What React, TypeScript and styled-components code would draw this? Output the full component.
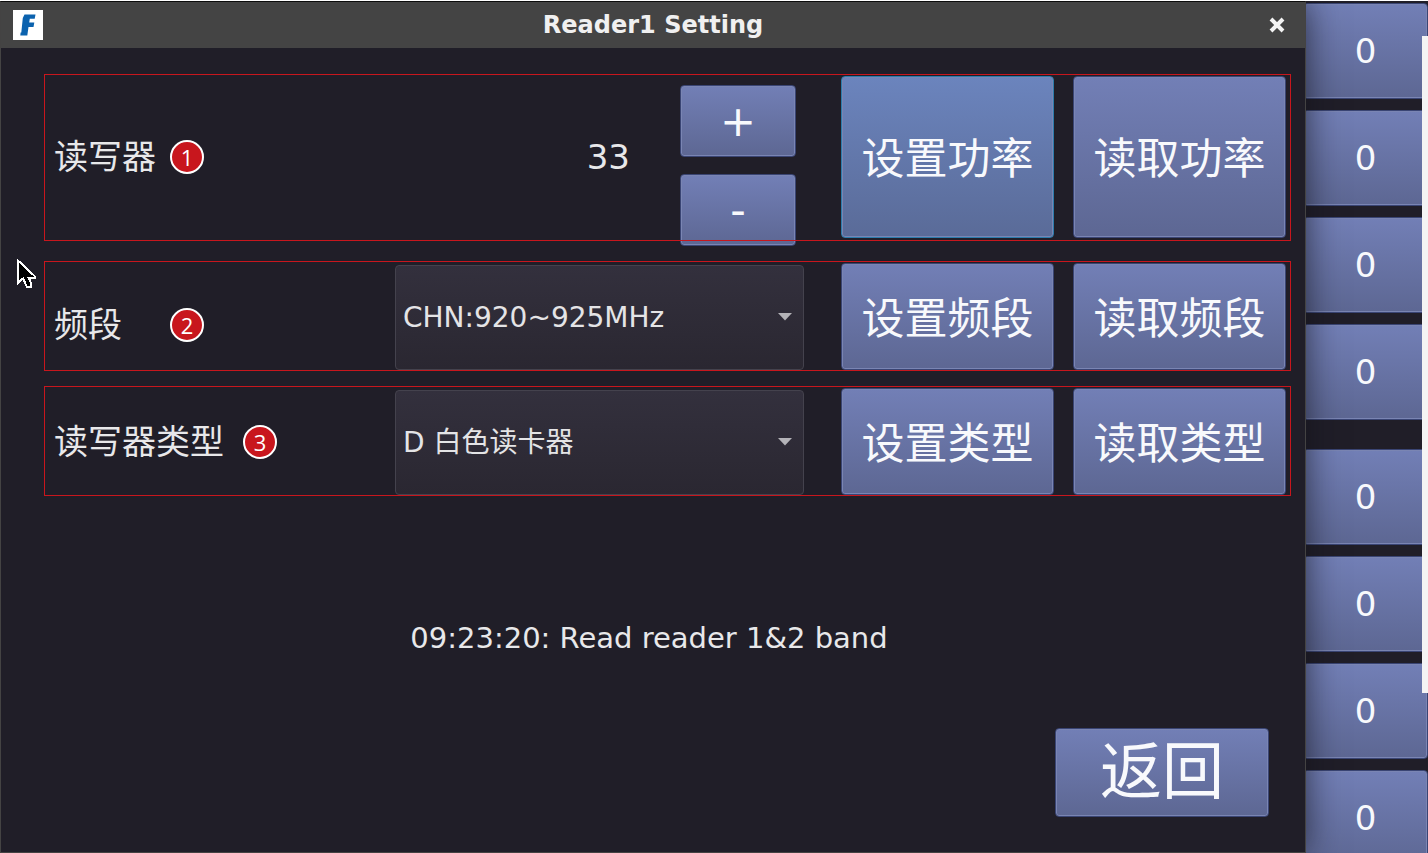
import React, { useState } from "react";
import styled, { createGlobalStyle, css } from "styled-components";

const uiFont = `"DejaVu Sans", "Noto Sans CJK SC", sans-serif`;

const GlobalStyle = createGlobalStyle`
  *, *::before, *::after { box-sizing: border-box; }
  body {
    margin: 0;
    background: #201e28;
    color: #e8e8ea;
    font-family: ${uiFont};
    overflow: hidden;
  }
  button, select { font-family: inherit; color: inherit; margin: 0; }
`;

const Screen = styled.div`
  position: relative;
  display: flex;
  height: 100vh;
  border-top: 1px solid #fff;
  overflow: hidden;
`;

const Dialog = styled.main`
  position: relative;
  z-index: 1;
  flex: 1;
  min-width: 0;
  display: flex;
  flex-direction: column;
  background: #201e28;
  border: 1px solid #444343;
  border-top-color: #0d0d0d;
  box-shadow: 0 0 32px rgba(16, 16, 24, 0.7);
`;

const TitleBar = styled.header`
  flex: none;
  display: grid;
  grid-template-columns: 60px 1fr 60px;
  align-items: center;
  height: 46px;
  padding: 0 12px;
  background: #444;
`;

const Title = styled.h1`
  margin: 0;
  text-align: center;
  font-size: 24px;
  line-height: 28px;
  font-weight: 700;
  color: #f0f0f0;
`;

const CloseButton = styled.button`
  justify-self: end;
  display: flex;
  align-items: center;
  justify-content: center;
  width: 32px;
  height: 32px;
  padding: 0;
  border: 0;
  background: none;
`;

const Body = styled.div`
  flex: 1;
  display: flex;
  flex-direction: column;
  padding: 26px 14px 35px 43px;
`;

const SettingRow = styled.section<{ $tall?: boolean; $gap?: number }>`
  position: relative;
  display: grid;
  grid-template-columns: 1fr 409px 213px 213px;
  grid-template-rows: 100%;
  column-gap: 19px;
  height: ${(p) => (p.$tall ? 167 : 110)}px;
  margin-top: ${(p) => p.$gap ?? 0}px;
  padding: 2px 5px ${(p) => (p.$tall ? 4 : 1)}px 10px;

  &::after {
    content: "";
    position: absolute;
    inset: 0;
    border: 1px solid #c8161d;
    pointer-events: none;
  }
`;

const LabelCell = styled.div<{ $gap: number; $low?: boolean }>`
  display: flex;
  align-items: center;
  gap: ${(p) => p.$gap}px;
  padding-top: ${(p) => (p.$low ? 16 : 0)}px;
  font-size: 34px;
  line-height: 48px;
  white-space: nowrap;
`;

const Badge = styled.span`
  display: flex;
  align-items: center;
  justify-content: center;
  width: 34px;
  height: 34px;
  border: 2px solid #fff;
  border-radius: 50%;
  background: #c8161d;
  color: #fff;
  font: 400 22px/30px "Open Sans", sans-serif;
`;

const FieldCell = styled.div`
  position: relative;
  margin-right: 18px;
  margin-left: -18px;
`;

const PowerCell = styled(FieldCell)`
  display: flex;
  justify-content: flex-end;
  align-items: center;
  gap: 50px;
  padding-right: 8px;
`;

const PowerValue = styled.output`
  font-size: 34px;
  line-height: 48px;
`;

const Stepper = styled.div`
  align-self: flex-start;
  display: flex;
  flex-direction: column;
  gap: 17px;
  width: 116px;
  padding-top: 9px;
`;

const PushButton = styled.button<{ $active?: boolean }>`
  display: flex;
  align-items: center;
  justify-content: center;
  padding: 0;
  border: 1px solid #3a4574;
  border-radius: 4px;
  background: linear-gradient(#727fb6, #5d6793);
  box-shadow: inset 0 0 0 1px #7a85b3;
  color: #f8f9fc;
  font-size: 34px;
  line-height: 40px;

  ${(p) =>
    p.$active &&
    css`
      border-color: #2c7cab;
      background: linear-gradient(#6b84bd, #5a6b98);
    `}
`;

const StepButton = styled(PushButton)`
  height: 72px;
  font-size: 43px;
`;

const ActionButton = styled(PushButton)<{ $tall?: boolean }>`
  height: ${(p) => (p.$tall ? 162 : 107)}px;
  padding-top: 4px;
  font-size: 43px;
  line-height: 60px;
`;

const Select = styled.select`
  appearance: none;
  width: 100%;
  height: 105px;
  margin-top: 2px;
  padding: 0 40px 0 7px;
  border: 1px solid #44424d;
  border-radius: 4px;
  background: linear-gradient(#33303d, #2a2731);
  color: #e4e4e6;
  font-size: 28px;
`;

const Arrow = styled.svg`
  position: absolute;
  right: 11px;
  top: 49px;
  pointer-events: none;
`;

const Status = styled.p`
  margin: 122px 37px 0 0;
  text-align: center;
  font-size: 29px;
  line-height: 40px;
`;

const Footer = styled.footer`
  display: flex;
  justify-content: flex-end;
  margin-top: auto;
  padding-right: 22px;
`;

const ReturnButton = styled(PushButton)`
  width: 214px;
  height: 89px;
  font-size: 62px;
  line-height: 84px;
`;

const Sidebar = styled.aside`
  flex: none;
  display: flex;
  flex-direction: column;
  gap: 29px;
  width: 122px;
  padding-top: 2px;
`;

const CountGroup = styled.div`
  display: flex;
  flex-direction: column;
  gap: 11px;
`;

const CountButton = styled(PushButton)`
  height: 96px;
  margin-left: -3px;
`;

const ScrollThumb = styled.div`
  position: absolute;
  z-index: 2;
  top: 35px;
  right: 0;
  width: 6px;
  height: 657px;
  background: #f4f4f4;
`;

const Pointer = styled.svg`
  position: absolute;
  z-index: 3;
  left: 17px;
  top: 258px;
`;

const Logo = () => (
  <svg width="30" height="30" viewBox="0 0 30 30" role="img" aria-label="Logo">
    <rect width="30" height="30" fill="#fff" />
    <path
      d="M11.500 4.500H22.500L21.700 8.800H16.800L16.200 12.500H21.300L20.500 17H15.500L14.300 25.500H7.300L7.600 22.500H8.300L9.800 8Z"
      fill="#0b62ae"
    />
  </svg>
);

const DropArrow = () => (
  <Arrow width="16" height="9" viewBox="0 0 16 9" aria-hidden="true">
    <path d="M1 1H15L8 8.500Z" fill="#b4b3b8" />
  </Arrow>
);

export default function App() {
  const [power, setPower] = useState(33);

  return (
    <>
      <GlobalStyle />
      <Screen>
        <Dialog>
          <TitleBar>
            <Logo />
            <Title>Reader1 Setting</Title>
            <CloseButton aria-label="Close">
              <svg width="18" height="18" viewBox="0 0 18 18">
                <path d="M3 3L15 15M15 3L3 15" stroke="#f4f4f4" strokeWidth="4" />
              </svg>
            </CloseButton>
          </TitleBar>
          <Body>
            <SettingRow $tall>
              <LabelCell $gap={14}>
                <span>读写器</span>
                <Badge>1</Badge>
              </LabelCell>
              <PowerCell>
                <PowerValue>{power}</PowerValue>
                <Stepper>
                  <StepButton onClick={() => setPower(power + 1)}>+</StepButton>
                  <StepButton onClick={() => setPower(power - 1)}>-</StepButton>
                </Stepper>
              </PowerCell>
              <ActionButton $tall $active>设置功率</ActionButton>
              <ActionButton $tall>读取功率</ActionButton>
            </SettingRow>

            <SettingRow $gap={20}>
              <LabelCell $gap={48} $low>
                <label htmlFor="band">频段</label>
                <Badge>2</Badge>
              </LabelCell>
              <FieldCell>
                <Select id="band">
                  <option>CHN:920~925MHz</option>
                </Select>
                <DropArrow />
              </FieldCell>
              <ActionButton>设置频段</ActionButton>
              <ActionButton>读取频段</ActionButton>
            </SettingRow>

            <SettingRow $gap={15}>
              <LabelCell $gap={19}>
                <label htmlFor="type">读写器类型</label>
                <Badge>3</Badge>
              </LabelCell>
              <FieldCell>
                <Select id="type">
                  <option>D 白色读卡器</option>
                </Select>
                <DropArrow />
              </FieldCell>
              <ActionButton>设置类型</ActionButton>
              <ActionButton>读取类型</ActionButton>
            </SettingRow>

            <Status role="status">09:23:20: Read reader 1&amp;2 band</Status>

            <Footer>
              <ReturnButton>返回</ReturnButton>
            </Footer>
          </Body>
        </Dialog>

        <Sidebar>
          {[0, 1].map((group) => (
            <CountGroup key={group}>
              {[0, 0, 0, 0].map((count, i) => (
                <CountButton key={i}>{count}</CountButton>
              ))}
            </CountGroup>
          ))}
        </Sidebar>

        <ScrollThumb />
        <Pointer width="20" height="32" viewBox="0 0 20 32" aria-hidden="true">
          <path
            d="M1 1.500V24L6 19.500L10 28H14V24L11.500 18.500H17.500V17Z"
            fill="#000"
            stroke="#fff"
            strokeWidth="2"
            shapeRendering="crispEdges"
          />
        </Pointer>
      </Screen>
    </>
  );
}
